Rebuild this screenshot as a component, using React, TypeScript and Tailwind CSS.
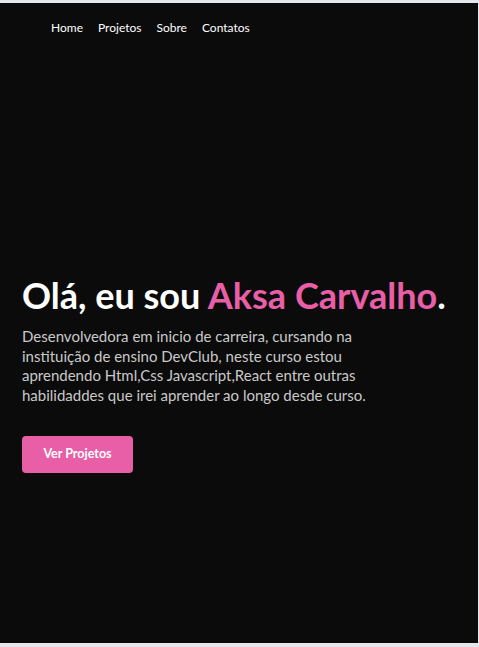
import React from "react";

export default function App() {
  const font = { fontFamily: 'Lato, "Noto Sans", sans-serif' };
  return (
    <div className="h-[647px] w-[479px] bg-[#e4e7ec] pt-[3px] pb-[4px] pr-[1px]" style={font}>
      <div className="flex h-full flex-col bg-[#0b0b0b]">
        <nav className="flex gap-[15px] pl-[51px] pt-[16px] text-[12px] text-white">
          <a>Home</a>
          <a>Projetos</a>
          <a>Sobre</a>
          <a>Contatos</a>
        </nav>
        <main className="flex flex-col items-start pl-[22px] pt-[236px]">
          <h1 className="whitespace-nowrap text-[36px] font-bold leading-[44px] text-white">
            Olá, eu sou <span className="text-[#e85fa8]">Aksa Carvalho</span>.
          </h1>
          <p className="mt-[10px] w-[380px] text-[15px] leading-[19.7px] text-[#c9c9c9]">
            Desenvolvedora em inicio de carreira, cursando na instituição de ensino DevClub, neste curso estou aprendendo Html,Css Javascript,React entre outras habilidaddes que irei aprender ao longo desde curso.
          </p>
          <button className="mt-[30px] flex h-[37px] w-[111px] items-center justify-center rounded-[4px] bg-[#e85fa8] text-[12.5px] font-bold text-white">
            Ver Projetos
          </button>
        </main>
      </div>
    </div>
  );
}
